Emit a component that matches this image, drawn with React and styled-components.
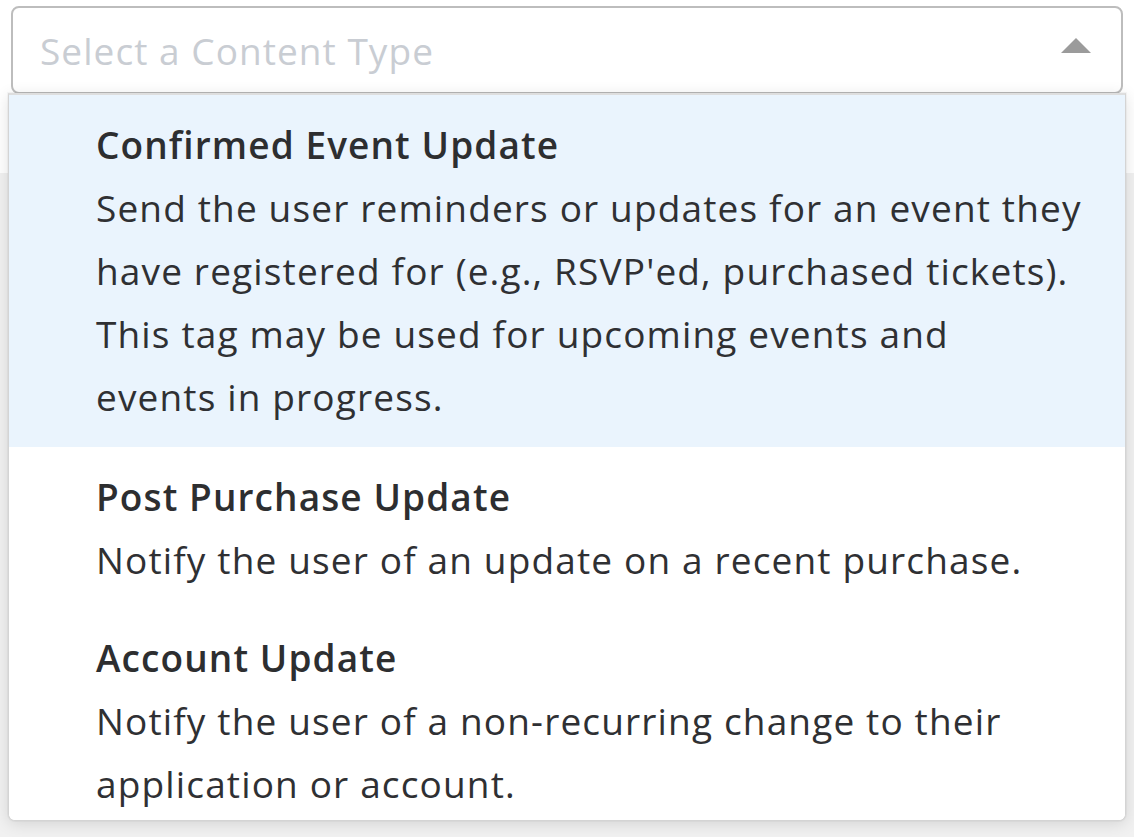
import React from 'react'
import styled, { createGlobalStyle } from 'styled-components'

const GlobalStyle = createGlobalStyle`
  html, body {
    margin: 0;
    padding: 0;
    background: #ffffff;
  }
  body {
    font-family: "Open Sans", "Noto Sans", Arial, sans-serif;
    color: #2f3033;
  }
`

const Page = styled.div`
  display: flex;
  flex-direction: column;
  width: 1134px;
  height: 837px;
  overflow: hidden;
`

const Header = styled.div`
  height: 173px;
  padding: 6px 11px 0 11px;
  box-sizing: border-box;
  background: #ffffff;
`

const Body = styled.div`
  flex: 1;
  background: #f1f1f1;
`

const SelectWrap = styled.div`
  position: relative;
`

const SelectBox = styled.div`
  height: 88px;
  box-sizing: border-box;
  display: flex;
  align-items: center;
  justify-content: space-between;
  padding: 0 30px 0 27px;
  border: 2px solid #bdbdbd;
  border-radius: 8px;
  background: #ffffff;
`

const Placeholder = styled.span`
  font-size: 37px;
  letter-spacing: 1.05px;
  color: #c9cdd3;
`

const Caret = styled.span`
  width: 0;
  height: 0;
  border-left: 15px solid transparent;
  border-right: 15px solid transparent;
  border-bottom: 15px solid #9b9b9b;
  margin-top: -10px;
`

const Menu = styled.ul`
  position: absolute;
  top: 87px;
  left: -3px;
  right: -3px;
  height: 725px;
  margin: 0;
  padding: 0;
  list-style: none;
  overflow: hidden;
  background: #ffffff;
  border: 1px solid #d4d4d4;
  border-top-width: 2px;
  border-top-color: #dedede;
  border-radius: 0 0 7px 7px;
  box-shadow: 0 0 0 1px rgba(0, 0, 0, 0.03), 0 3px 16px rgba(0, 0, 0, 0.12);
`

const Option = styled.li`
  padding: 18px 20px ${p => (p.$active ? '19px' : '17px')} 87px;
  font-size: 37px;
  line-height: 63px;
  background: ${p => (p.$active ? '#eaf4fd' : '#ffffff')};
`

const Title = styled.div`
  font-weight: 600;
  letter-spacing: 1.1px;
  color: #2d2e30;
  white-space: nowrap;
`

const Line = styled.div`
  font-weight: 400;
  letter-spacing: 1.15px;
  color: #2f3033;
  white-space: nowrap;
`

const options = [
  {
    title: 'Confirmed Event Update',
    lines: [
      'Send the user reminders or updates for an event they',
      "have registered for (e.g., RSVP'ed, purchased tickets).",
      'This tag may be used for upcoming events and',
      'events in progress.',
    ],
  },
  {
    title: 'Post Purchase Update',
    lines: ['Notify the user of an update on a recent purchase.'],
  },
  {
    title: 'Account Update',
    lines: [
      'Notify the user of a non-recurring change to their',
      'application or account.',
    ],
  },
]

export default function App() {
  return (
    <Page>
      <GlobalStyle />
      <Header>
        <SelectWrap>
          <SelectBox>
            <Placeholder>Select a Content Type</Placeholder>
            <Caret />
          </SelectBox>
          <Menu>
            {options.map((o, i) => (
              <Option key={o.title} $active={i === 0}>
                <Title>{o.title}</Title>
                {o.lines.map(l => (
                  <Line key={l}>{l}</Line>
                ))}
              </Option>
            ))}
          </Menu>
        </SelectWrap>
      </Header>
      <Body />
    </Page>
  )
}
